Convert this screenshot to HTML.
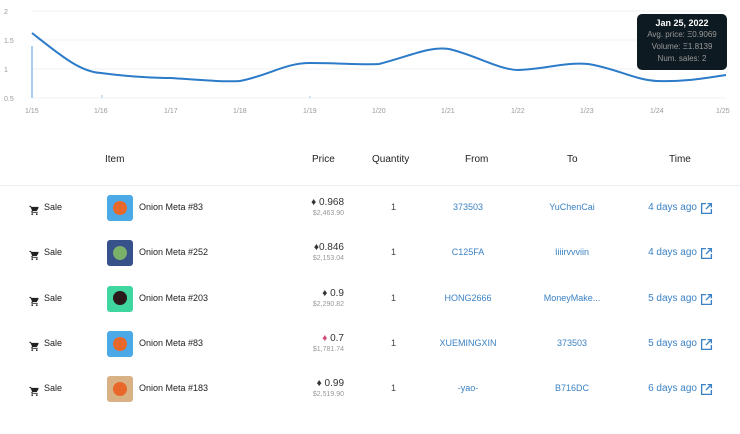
<!DOCTYPE html>
<html><head><style>
body{margin:0;width:740px;height:406px;background:#fff;font-family:"Liberation Sans",sans-serif;overflow:hidden;position:relative}
.a{position:absolute;white-space:nowrap}
.h{font-size:10px;color:#222;top:154px}
.row{position:absolute;left:0;width:740px;height:45px}
.row>div{position:absolute;white-space:nowrap}
.sale{left:44px;top:-6px;font-size:9px;color:#222}
.cart{left:29px;top:-5px}
.av{left:107px;top:-13px;width:26px;height:26px;border-radius:3px;overflow:hidden}
.nm{left:139px;top:-6px;font-size:9px;color:#222}
.pr{right:396px;top:-11px;font-size:10px;color:#333;text-align:right}
.usd{right:396px;top:2px;font-size:7px;color:#999}
.q{left:391px;top:-6px;font-size:9px;color:#444}
.fr{left:418px;width:100px;text-align:center;top:-6px;font-size:9px;color:#3b82c4}
.to{left:522px;width:100px;text-align:center;top:-6px;font-size:9px;color:#3b82c4}
.tm{right:43px;top:-6px;font-size:10px;color:#3b82c4}
.ext{left:700px;top:-6px}
</style></head><body>
<svg class="a" style="left:0;top:0" width="740" height="120">
<g stroke="#eef1f4" stroke-width="1">
<line x1="32" y1="11" x2="726" y2="11"/><line x1="32" y1="40" x2="726" y2="40"/><line x1="32" y1="69" x2="726" y2="69"/><line x1="32" y1="98" x2="726" y2="98"/>
</g>
<g font-size="7" fill="#999" font-family="Liberation Sans">
<text x="4" y="14">2</text><text x="4" y="43">1.5</text><text x="4" y="72">1</text><text x="4" y="101">0.5</text>
<text x="25" y="113">1/15</text><text x="94" y="113">1/16</text><text x="164" y="113">1/17</text><text x="233" y="113">1/18</text><text x="303" y="113">1/19</text><text x="372" y="113">1/20</text><text x="441" y="113">1/21</text><text x="511" y="113">1/22</text><text x="580" y="113">1/23</text><text x="650" y="113">1/24</text><text x="716" y="113">1/25</text>
</g>
<rect x="31" y="46" width="2" height="52" fill="#a9cdee"/>
<rect x="101" y="95" width="2" height="3" fill="#cfe2f3"/>
<rect x="309" y="96" width="2" height="2" fill="#cfe2f3"/>
<path d="M32,33 C60,55 80,72 101,73 C130,77 160,78 171,78 C200,80 225,82 240,81 C270,75 285,63 310,63 C340,63 360,65 379,64 C410,56 430,46 449,49 C475,55 500,70 518,70 C545,69 565,62 588,64 C615,68 635,80 657,81 C685,82 705,78 726,75" fill="none" stroke="#2c7bc9" stroke-width="2"/>
</svg>
<div class="a" style="left:637px;top:14px;width:90px;height:56px;background:#0e1a21;border-radius:5px;text-align:center;font-size:8px;line-height:12px;color:#999;padding-top:3px;box-sizing:border-box">
<div style="color:#fff;font-weight:bold;font-size:9px">Jan 25, 2022</div>Avg. price: Ξ0.9069<br>Volume: Ξ1.8139<br>Num. sales: 2</div>

<div class="a h" style="left:105px">Item</div>
<div class="a h" style="left:312px">Price</div>
<div class="a h" style="left:372px">Quantity</div>
<div class="a h" style="left:465px">From</div>
<div class="a h" style="left:567px">To</div>
<div class="a h" style="left:669px">Time</div>
<div class="a" style="left:0;top:185px;width:740px;height:1px;background:#eceef0"></div>

<div class="row" style="top:208px">
<div class="cart"><svg width="11" height="11" viewBox="0 0 24 24"><path fill="#222" d="M7 18a2 2 0 1 0 0 4 2 2 0 0 0 0-4zM1 2v2h2l3.6 7.6-1.4 2.4c-.1.3-.2.6-.2 1 0 1.1.9 2 2 2h12v-2H7.4l1.1-2h7.5c.8 0 1.4-.4 1.7-1l3.6-6.5L19.6 4H5.2l-.9-2H1zm16 16a2 2 0 1 0 0 4 2 2 0 0 0 0-4z"/></svg></div>
<div class="sale">Sale</div><div class="av" style="background:#4aa9e6"><div style="margin:6px 0 0 6px;width:14px;height:14px;border-radius:50%;background:#e8672a"></div></div>
<div class="nm">Onion Meta #83</div><div class="pr">♦ 0.968</div><div class="usd">$2,463.90</div><div class="q">1</div><div class="fr">373503</div><div class="to">YuChenCai</div><div class="tm">4 days ago</div>
<div class="ext"><svg width="13" height="13" viewBox="0 0 24 24"><path fill="none" stroke="#3b82c4" stroke-width="2.5" d="M11 3H3v18h18v-8M14 3h7v7M21 3L11 13"/></svg></div></div>

<div class="row" style="top:253px">
<div class="cart"><svg width="11" height="11" viewBox="0 0 24 24"><path fill="#222" d="M7 18a2 2 0 1 0 0 4 2 2 0 0 0 0-4zM1 2v2h2l3.6 7.6-1.4 2.4c-.1.3-.2.6-.2 1 0 1.1.9 2 2 2h12v-2H7.4l1.1-2h7.5c.8 0 1.4-.4 1.7-1l3.6-6.5L19.6 4H5.2l-.9-2H1zm16 16a2 2 0 1 0 0 4 2 2 0 0 0 0-4z"/></svg></div>
<div class="sale">Sale</div><div class="av" style="background:#37518a"><div style="margin:6px 0 0 6px;width:14px;height:14px;border-radius:50%;background:#7bb26a"></div></div>
<div class="nm">Onion Meta #252</div><div class="pr">♦0.846</div><div class="usd">$2,153.04</div><div class="q">1</div><div class="fr">C125FA</div><div class="to">Iiiirvvviin</div><div class="tm">4 days ago</div>
<div class="ext"><svg width="13" height="13" viewBox="0 0 24 24"><path fill="none" stroke="#3b82c4" stroke-width="2.5" d="M11 3H3v18h18v-8M14 3h7v7M21 3L11 13"/></svg></div></div>

<div class="row" style="top:299px">
<div class="cart"><svg width="11" height="11" viewBox="0 0 24 24"><path fill="#222" d="M7 18a2 2 0 1 0 0 4 2 2 0 0 0 0-4zM1 2v2h2l3.6 7.6-1.4 2.4c-.1.3-.2.6-.2 1 0 1.1.9 2 2 2h12v-2H7.4l1.1-2h7.5c.8 0 1.4-.4 1.7-1l3.6-6.5L19.6 4H5.2l-.9-2H1zm16 16a2 2 0 1 0 0 4 2 2 0 0 0 0-4z"/></svg></div>
<div class="sale">Sale</div><div class="av" style="background:#3fd6a0"><div style="margin:5px 0 0 6px;width:14px;height:14px;border-radius:50%;background:#2a1a1a"></div></div>
<div class="nm">Onion Meta #203</div><div class="pr">♦ 0.9</div><div class="usd">$2,290.82</div><div class="q">1</div><div class="fr">HONG2666</div><div class="to">MoneyMake...</div><div class="tm">5 days ago</div>
<div class="ext"><svg width="13" height="13" viewBox="0 0 24 24"><path fill="none" stroke="#3b82c4" stroke-width="2.5" d="M11 3H3v18h18v-8M14 3h7v7M21 3L11 13"/></svg></div></div>

<div class="row" style="top:344px">
<div class="cart"><svg width="11" height="11" viewBox="0 0 24 24"><path fill="#222" d="M7 18a2 2 0 1 0 0 4 2 2 0 0 0 0-4zM1 2v2h2l3.6 7.6-1.4 2.4c-.1.3-.2.6-.2 1 0 1.1.9 2 2 2h12v-2H7.4l1.1-2h7.5c.8 0 1.4-.4 1.7-1l3.6-6.5L19.6 4H5.2l-.9-2H1zm16 16a2 2 0 1 0 0 4 2 2 0 0 0 0-4z"/></svg></div>
<div class="sale">Sale</div><div class="av" style="background:#4aa9e6"><div style="margin:6px 0 0 6px;width:14px;height:14px;border-radius:50%;background:#e8672a"></div></div>
<div class="nm">Onion Meta #83</div><div class="pr"><span style="color:#d44a7a">♦</span> 0.7</div><div class="usd">$1,781.74</div><div class="q">1</div><div class="fr">XUEMINGXIN</div><div class="to">373503</div><div class="tm">5 days ago</div>
<div class="ext"><svg width="13" height="13" viewBox="0 0 24 24"><path fill="none" stroke="#3b82c4" stroke-width="2.5" d="M11 3H3v18h18v-8M14 3h7v7M21 3L11 13"/></svg></div></div>

<div class="row" style="top:389px">
<div class="cart"><svg width="11" height="11" viewBox="0 0 24 24"><path fill="#222" d="M7 18a2 2 0 1 0 0 4 2 2 0 0 0 0-4zM1 2v2h2l3.6 7.6-1.4 2.4c-.1.3-.2.6-.2 1 0 1.1.9 2 2 2h12v-2H7.4l1.1-2h7.5c.8 0 1.4-.4 1.7-1l3.6-6.5L19.6 4H5.2l-.9-2H1zm16 16a2 2 0 1 0 0 4 2 2 0 0 0 0-4z"/></svg></div>
<div class="sale">Sale</div><div class="av" style="background:#d8b184"><div style="margin:6px 0 0 6px;width:14px;height:14px;border-radius:50%;background:#e8672a"></div></div>
<div class="nm">Onion Meta #183</div><div class="pr">♦ 0.99</div><div class="usd">$2,519.90</div><div class="q">1</div><div class="fr">-yao-</div><div class="to">B716DC</div><div class="tm">6 days ago</div>
<div class="ext"><svg width="13" height="13" viewBox="0 0 24 24"><path fill="none" stroke="#3b82c4" stroke-width="2.5" d="M11 3H3v18h18v-8M14 3h7v7M21 3L11 13"/></svg></div></div>
</body></html>
